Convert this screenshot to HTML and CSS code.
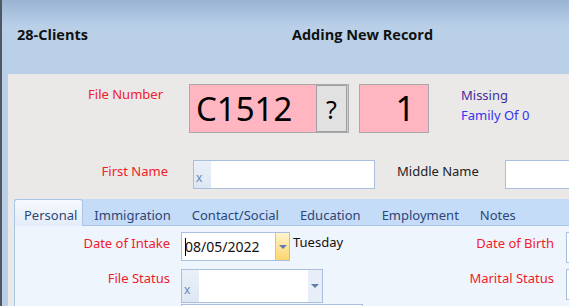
FILE: index.html
```html
<!DOCTYPE html>
<html lang="en">
<head>
    <meta charset="UTF-8">
    <title>28-Clients</title>
    <link rel="stylesheet" href="styles.css">
</head>
<body>
    <div class="window">
        <div class="header">
            <span class="form-name">28-Clients</span>
            <span class="form-mode">Adding New Record</span>
        </div>

        <div class="main">
            <div class="row row-file">
                <div class="label red w155">File Number</div>
                <div class="file-box">
                    <span class="file-no">C1512</span>
                    <button class="help-btn">?</button>
                </div>
                <div class="seq-box">1</div>
                <div class="family">
                    <div class="missing">Missing</div>
                    <div class="family-of">Family Of 0</div>
                </div>
            </div>

            <div class="row row-name">
                <div class="label red w160">First Name</div>
                <div class="combo first">
                    <span class="clear">x</span>
                    <span class="value"></span>
                </div>
                <div class="label dark middle">Middle Name</div>
                <div class="combo middle-box">
                    <span class="value"></span>
                </div>
            </div>

            <div class="tabs">
                <div class="tab active">Personal</div>
                <div class="tab">Immigration</div>
                <div class="tab">Contact/Social</div>
                <div class="tab">Education</div>
                <div class="tab">Employment</div>
                <div class="tab">Notes</div>
            </div>

            <div class="tab-body">
                <div class="field-row">
                    <div class="label red w157">Date of Intake</div>
                    <div class="date-box">
                        <span class="date-val"><span class="caret"></span>08/05/2022</span>
                        <span class="date-drop"><span class="arrow"></span></span>
                    </div>
                    <div class="weekday">Tuesday</div>
                    <div class="label red right-label">Date of Birth</div>
                    <div class="stub"></div>
                </div>
                <div class="field-row status-row">
                    <div class="label red w157">File Status</div>
                    <div class="combo status">
                        <span class="clear">x</span>
                        <span class="value"></span>
                        <span class="drop"><span class="arrow"></span></span>
                    </div>
                    <div class="label red right-label wide">Marital Status</div>
                    <div class="stub"></div>
                </div>
                <div class="field-row">
                    <div class="label w157"></div>
                    <div class="combo next"></div>
                </div>
            </div>
        </div>
    </div>
</body>
</html>
```

FILE: styles.css
```css
body {
    margin: 0;
    font-family: "Segoe UI", "Noto Sans", sans-serif;
    font-size: 13px;
    overflow: hidden;
}
.window {
    height: 306px;
    border-left: 2px solid #4f5762;
    background: #b9d0e8;
    overflow: hidden;
}
.header {
    height: 74px;
    box-sizing: border-box;
    padding: 0 0 6px 15px;
    display: flex;
    align-items: center;
    background: linear-gradient(#99b4d3, #b9d0e8 36%, #b9d0e8);
    font-family: "Open Sans", sans-serif;
    font-weight: bold;
    font-size: 14.5px;
    color: #111;
}
.form-mode {
    margin-left: 204px;
}
.main {
    margin-left: 6px;
    height: 232px;
    background: #ebe8e8;
    overflow: hidden;
}
.row, .field-row {
    display: flex;
    align-items: flex-start;
}
.row > *, .field-row > * {
    flex: none;
}
.label {
    text-align: right;
    white-space: nowrap;
    line-height: 16px;
}
.red {
    color: #f0202a;
}
.dark {
    color: #222;
}
.w155 {
    width: 155px;
}
.w157 {
    width: 155px;
}
.w160 {
    width: 160px;
}

/* file number row */
.row-file {
    padding-top: 10px;
}
.row-file .label {
    padding-top: 2px;
}
.file-box {
    margin-left: 26px;
    width: 158px;
    height: 47px;
    border: 1px solid #a9a9a9;
    background: #ffb6c1;
    display: flex;
    align-items: center;
    justify-content: space-between;
}
.file-no {
    font-size: 33px;
    padding-left: 6px;
    color: #000;
}
.help-btn {
    width: 31px;
    height: 47px;
    margin: 0 1px 0 0;
    border: 1px solid #a0a0a0;
    background: #e1e1e1;
    font-family: "Segoe UI", "Noto Sans", sans-serif;
    font-size: 25px;
    padding: 0;
    color: #000;
}
.seq-box {
    margin-left: 10px;
    width: 55px;
    height: 47px;
    border: 1px solid #a9a9a9;
    background: #ffb6c1;
    font-size: 34px;
    line-height: 47px;
    text-align: right;
    padding-right: 13px;
}
.family {
    margin-left: 32px;
    padding-top: 1px;
    line-height: 20px;
}
.missing {
    color: #3c2fa0;
}
.family-of {
    color: #3434f0;
}

/* name row */
.row-name {
    padding-top: 27px;
}
.row-name .label {
    padding-top: 3px;
}
.combo {
    display: flex;
    height: 27px;
    border: 1px solid #a9bfdd;
    background: #fff;
}
.combo .clear {
    width: 17px;
    background: linear-gradient(#eaf0f8, #dde7f4);
    color: #6b86b5;
    font-size: 12px;
    display: flex;
    align-items: flex-end;
    padding-left: 2px;
    padding-bottom: 2px;
    box-sizing: border-box;
}
.combo .value {
    flex: 1;
}
.first {
    margin-left: 25px;
    width: 180px;
}
.middle {
    margin-left: 22px;
}
.middle-box {
    margin-left: 26px;
    width: 120px;
}

/* tabs */
.tabs {
    margin-top: 10px;
    margin-left: 6px;
    height: 26px;
    display: flex;
    background: #c4dcf8;
    border-bottom: 1px solid #a9c4e6;
    font-size: 13px;
}
.tab {
    flex: none;
    padding: 7px 10px 0 10px;
    margin-right: 1px;
    color: #2d4676;
}
.tab.active {
    background: linear-gradient(#f6f9fd, #e3ecf8);
    border: 1px solid #a8c6ea;
    border-bottom: none;
    border-radius: 3px 3px 0 0;
    height: 27px;
    box-sizing: border-box;
    padding: 6px 5px 0 9px;
    margin-right: 1px;
}
.tab-body {
    margin-left: 6px;
    background: #eff5fd;
    border-left: 1px solid #a9c4e6;
    height: 100px;
    padding-top: 6px;
}
.field-row {
    margin-bottom: 6px;
}
.field-row .label {
    padding-top: 3px;
}
.status-row .label {
    padding-top: 1px;
}
.date-box {
    margin-left: 11px;
    width: 107px;
    height: 27px;
    border: 1px solid #a9bfdd;
    background: #fff;
    display: flex;
}
.date-val {
    flex: 1;
    font-size: 14px;
    line-height: 27px;
    padding-left: 3px;
    position: relative;
    color: #111;
}
.caret {
    position: absolute;
    left: 3px;
    top: 5px;
    width: 1px;
    height: 18px;
    background: #000;
}
.date-drop {
    width: 13px;
    border-left: 1px solid #e2c578;
    background: linear-gradient(#fff4cc, #fdd56e);
    display: flex;
    align-items: center;
    justify-content: center;
}
.arrow {
    width: 0;
    height: 0;
    border-left: 4px solid transparent;
    border-right: 4px solid transparent;
    border-top: 4px solid #5f7cae;
}
.weekday {
    padding-left: 3px;
    padding-top: 1px;
    width: 176px;
    color: #111;
}
.right-label {
    width: 85px;
}
.right-label.wide {
    width: 92px;
}
.stub {
    margin-left: 12px;
    width: 30px;
    height: 29px;
    border: 1px solid #a9bfdd;
    background: #fff;
}
.status {
    margin-left: 11px;
    width: 140px;
    height: 32px;
    margin-right: 139px;
}
.status .clear {
    padding-bottom: 4px;
}
.status .drop {
    width: 14px;
    background: #e8eef7;
    display: flex;
    align-items: center;
    justify-content: center;
}
.next {
    margin-left: 11px;
    width: 180px;
    height: 20px;
    margin-top: -5px;
}
```
